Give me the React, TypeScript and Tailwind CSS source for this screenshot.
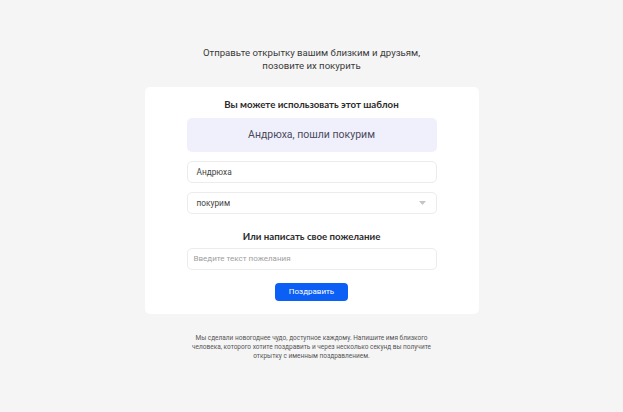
export default function App() {
  return (
    <div className="min-h-screen w-full bg-[#f5f5f5] flex flex-col items-center pt-[46px] font-['Roboto',sans-serif] text-[#333]">
      <p className="text-[9.6px] leading-[13px] text-center text-[#3a3a3a]">
        Отправьте открытку вашим близким и друзьям,
        <br />
        позовите их покурить
      </p>

      <div className="mt-[15px] w-[334px] h-[227px] bg-white rounded-[5px] flex flex-col items-center px-[42px]">
        <h2 className="mt-[11px] text-[9.7px] leading-[13px] font-bold font-['Lato',sans-serif] text-[#2b2b2b]">
          Вы можете использовать этот шаблон
        </h2>

        <div className="mt-[7px] w-full h-[34px] rounded-[5px] bg-[#f0f0fc] flex items-center justify-center text-[10.5px] text-[#4a4a5a]">
          Андрюха, пошли покурим
        </div>

        <div className="mt-[9px] w-full h-[22px] rounded-[5px] border border-[#ececec] flex items-center px-[9px] text-[8.3px] text-[#444]">
          Андрюха
        </div>

        <div className="mt-[9px] w-full h-[22px] rounded-[5px] border border-[#ececec] flex items-center justify-between px-[9px] text-[8.3px] text-[#444]">
          <span>покурим</span>
          <svg width="7" height="4" viewBox="0 0 7 4" className="mr-[1px]">
            <path d="M0 0h7L3.5 4z" fill="#c4c4c4" />
          </svg>
        </div>

        <h2 className="mt-[16px] text-[9.7px] leading-[13px] font-bold font-['Lato',sans-serif] text-[#2b2b2b]">
          Или написать свое пожелание
        </h2>

        <div className="mt-[5px] w-full h-[22px] rounded-[5px] border border-[#ececec] flex items-center px-[6px] text-[8px] text-[#a0a0a0]">
          Введите текст пожелания
        </div>

        <button className="mt-[13px] w-[73px] h-[18px] rounded-[4px] bg-[#0b5ff5] text-white text-[8px] flex items-center justify-center">
          Поздравить
        </button>
      </div>

      <p className="mt-[20px] text-[6.5px] leading-[9px] text-center text-[#555] whitespace-nowrap">
        Мы сделали новогоднее чудо, доступное каждому. Напишите имя близкого
        <br />
        человека, которого хотите поздравить и через несколько секунд вы получите
        <br />
        открытку с именным поздравлением.
      </p>
    </div>
  )
}
